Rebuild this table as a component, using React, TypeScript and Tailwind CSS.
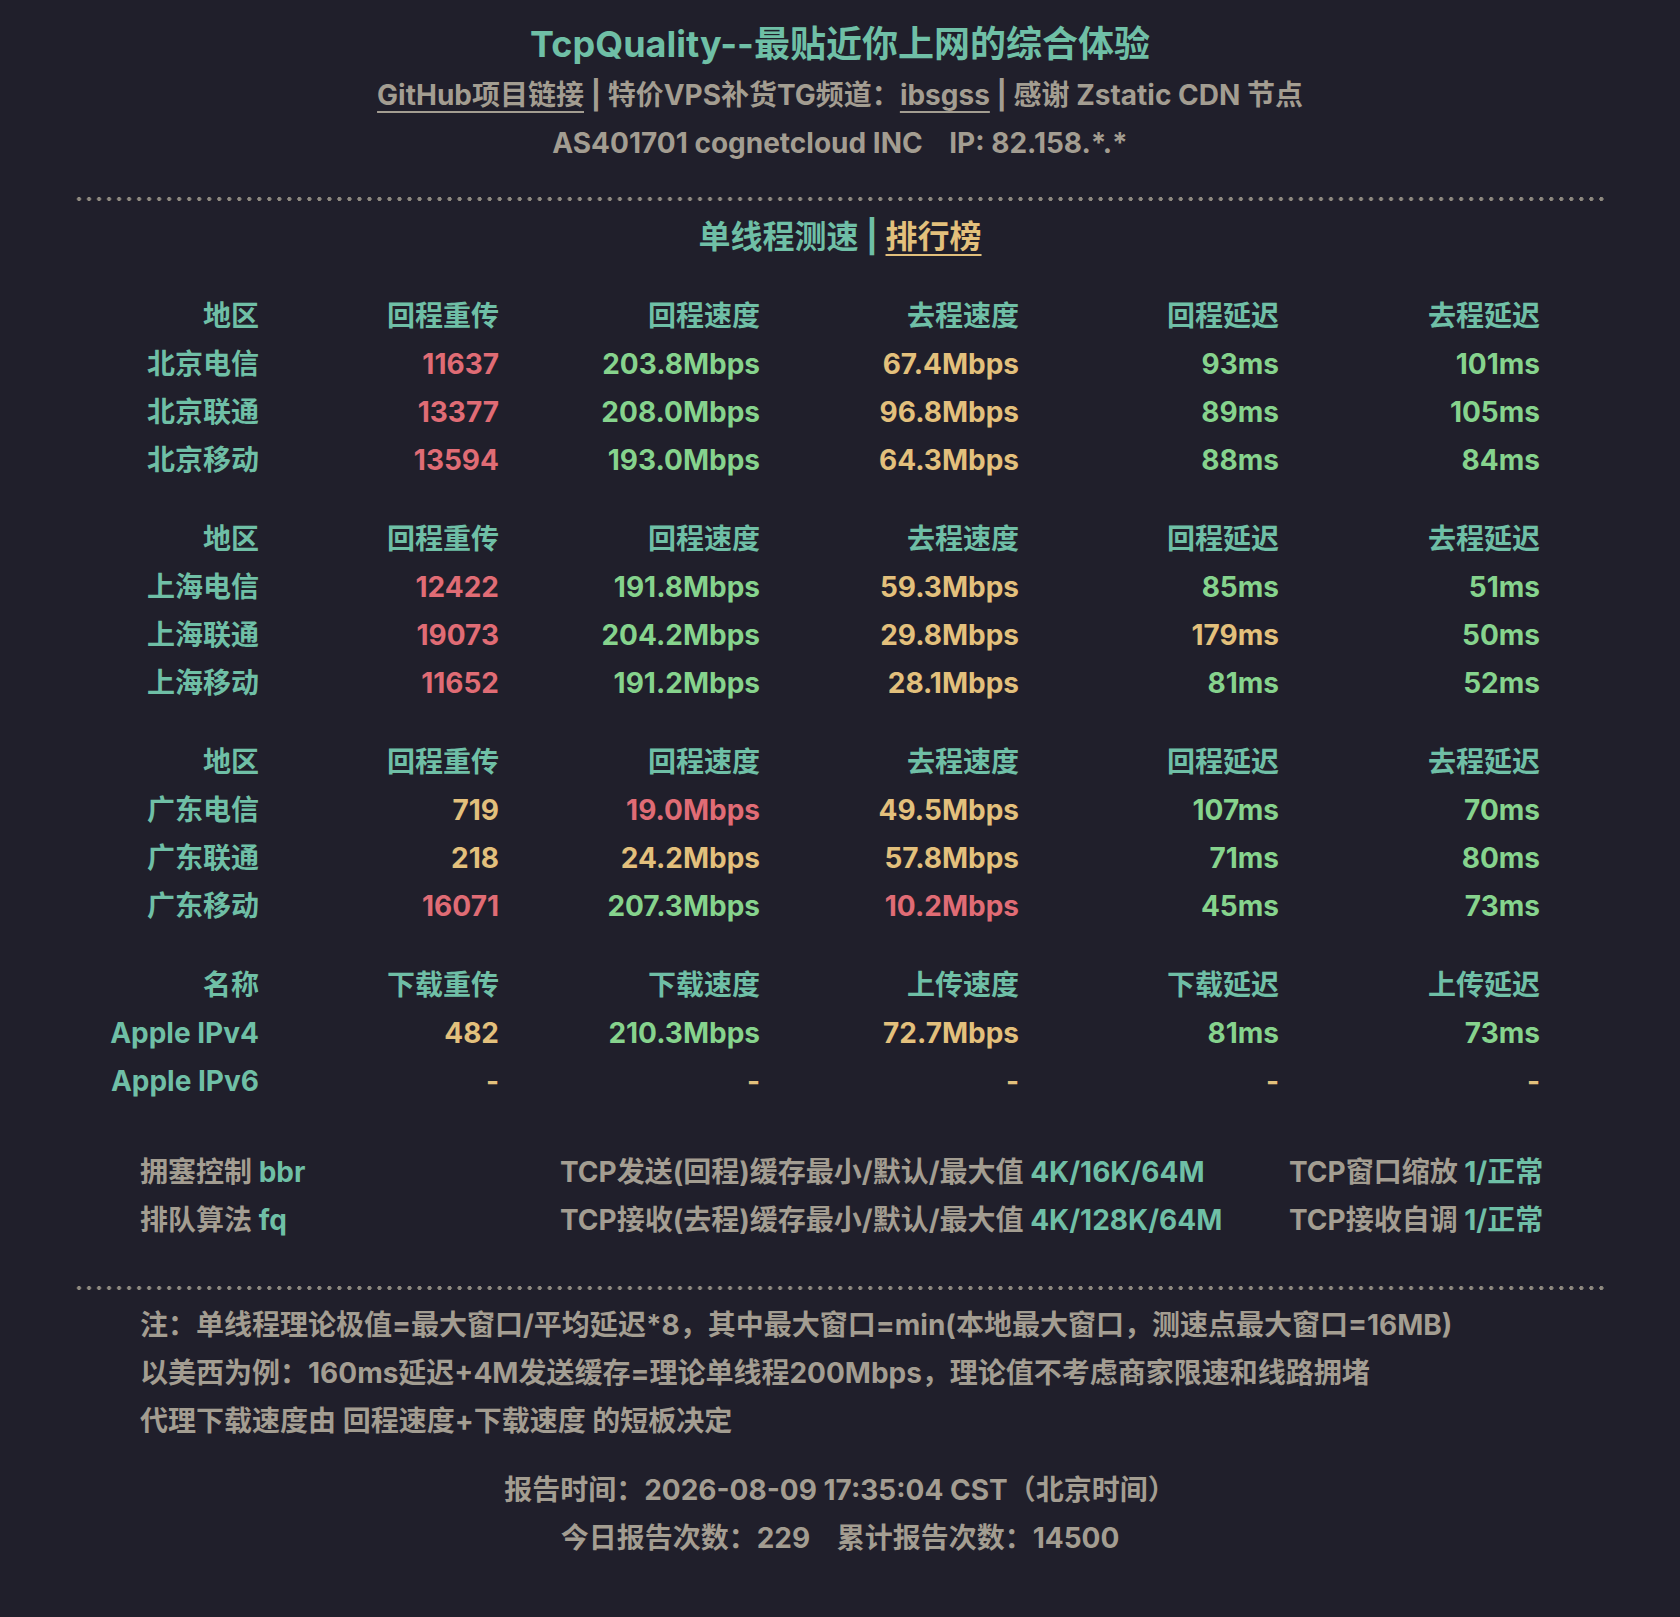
import React from 'react';

type Cell = { text: string; tone: 'red' | 'green' | 'yellow' };

interface Group {
  head: string[];
  rows: { name: string; cells: Cell[] }[];
}

const R = (text: string): Cell => ({ text, tone: 'red' });
const G = (text: string): Cell => ({ text, tone: 'green' });
const Y = (text: string): Cell => ({ text, tone: 'yellow' });

const lineHead = ['地区', '回程重传', '回程速度', '去程速度', '回程延迟', '去程延迟'];

const groups: Group[] = [
  {
    head: lineHead,
    rows: [
      { name: '北京电信', cells: [R('11637'), G('203.8Mbps'), Y('67.4Mbps'), G('93ms'), G('101ms')] },
      { name: '北京联通', cells: [R('13377'), G('208.0Mbps'), Y('96.8Mbps'), G('89ms'), G('105ms')] },
      { name: '北京移动', cells: [R('13594'), G('193.0Mbps'), Y('64.3Mbps'), G('88ms'), G('84ms')] },
    ],
  },
  {
    head: lineHead,
    rows: [
      { name: '上海电信', cells: [R('12422'), G('191.8Mbps'), Y('59.3Mbps'), G('85ms'), G('51ms')] },
      { name: '上海联通', cells: [R('19073'), G('204.2Mbps'), Y('29.8Mbps'), Y('179ms'), G('50ms')] },
      { name: '上海移动', cells: [R('11652'), G('191.2Mbps'), Y('28.1Mbps'), G('81ms'), G('52ms')] },
    ],
  },
  {
    head: lineHead,
    rows: [
      { name: '广东电信', cells: [Y('719'), R('19.0Mbps'), Y('49.5Mbps'), G('107ms'), G('70ms')] },
      { name: '广东联通', cells: [Y('218'), Y('24.2Mbps'), Y('57.8Mbps'), G('71ms'), G('80ms')] },
      { name: '广东移动', cells: [R('16071'), G('207.3Mbps'), R('10.2Mbps'), G('45ms'), G('73ms')] },
    ],
  },
  {
    head: ['名称', '下载重传', '下载速度', '上传速度', '下载延迟', '上传延迟'],
    rows: [
      { name: 'Apple IPv4', cells: [Y('482'), G('210.3Mbps'), Y('72.7Mbps'), G('81ms'), G('73ms')] },
      { name: 'Apple IPv6', cells: [Y('-'), Y('-'), Y('-'), Y('-'), Y('-')] },
    ],
  },
];

const toneClass = {
  red: 'text-[#e06c75]',
  green: 'text-[#86d38d]',
  yellow: 'text-[#e3c07c]',
};

function Dots() {
  return (
    <div className="ml-[74px] mr-[72px] h-[4px] bg-[radial-gradient(circle,#8f8a80_1.8px,transparent_2.2px)] bg-[length:10.02px_4px]" />
  );
}

function ResultGroup({ group }: { group: Group }) {
  return (
    <div className="grid grid-cols-[259px_240px_261px_259px_260px_261px] text-right">
      {group.head.map((h) => (
        <div key={h} className="h-[48px] leading-[48px] text-[#6fbfa6]">
          {h}
        </div>
      ))}
      {group.rows.map((row) => (
        <React.Fragment key={row.name}>
          <div className="h-[48px] leading-[48px] text-[#6fbfa6]">{row.name}</div>
          {row.cells.map((c, i) => (
            <div key={i} className={`h-[48px] leading-[48px] ${toneClass[c.tone]}`}>
              {c.text}
            </div>
          ))}
        </React.Fragment>
      ))}
    </div>
  );
}

export default function App() {
  return (
    <div
      className="w-[1680px] min-h-[1617px] bg-[#201f2b] text-[28px] font-bold text-[#a39d91]"
      style={{ fontFamily: 'Inter, "Noto Sans CJK SC", sans-serif' }}
    >
      {/* 标题 */}
      <div className="pt-[20px] text-center">
        <h1 className="h-[48px] leading-[48px] text-[36px] text-[#6fbfa6]">TcpQuality--最贴近你上网的综合体验</h1>
        <p className="mt-[3px] h-[48px] leading-[48px]">
          <span className="underline underline-offset-[6px] decoration-2">GitHub项目链接</span> | 特价VPS补货TG频道：
          <span className="underline underline-offset-[6px] decoration-2">ibsgss</span> | 感谢 Zstatic CDN 节点
        </p>
        <p className="h-[48px] leading-[48px] whitespace-pre">AS401701 cognetcloud INC    IP: 82.158.*.*</p>
      </div>

      <div className="mt-[30px]">
        <Dots />
      </div>

      <div className="mt-[12px] h-[48px] leading-[48px] text-center text-[32px] text-[#6fbfa6]">
        单线程测速 | <span className="text-[#e3c07c] underline underline-offset-[6px] decoration-2">排行榜</span>
      </div>

      {/* 测速结果 */}
      <div className="mt-[31px] flex flex-col gap-[31px]">
        {groups.map((g, i) => (
          <ResultGroup key={i} group={g} />
        ))}
      </div>

      {/* TCP 参数 */}
      <div className="mt-[43px] grid grid-cols-[420px_729px_1fr] pl-[140px]">
        <div className="h-[48px] leading-[48px]">
          拥塞控制 <span className="text-[#6fbfa6]">bbr</span>
        </div>
        <div className="h-[48px] leading-[48px]">
          TCP发送(回程)缓存最小/默认/最大值 <span className="text-[#6fbfa6]">4K/16K/64M</span>
        </div>
        <div className="h-[48px] leading-[48px]">
          TCP窗口缩放 <span className="text-[#6fbfa6]">1/正常</span>
        </div>
        <div className="h-[48px] leading-[48px]">
          排队算法 <span className="text-[#6fbfa6]">fq</span>
        </div>
        <div className="h-[48px] leading-[48px]">
          TCP接收(去程)缓存最小/默认/最大值 <span className="text-[#6fbfa6]">4K/128K/64M</span>
        </div>
        <div className="h-[48px] leading-[48px]">
          TCP接收自调 <span className="text-[#6fbfa6]">1/正常</span>
        </div>
      </div>

      <div className="mt-[42px]">
        <Dots />
      </div>

      {/* 说明 */}
      <div className="mt-[11px] pl-[140px]">
        <p className="h-[48px] leading-[48px]">
          注：单线程理论极值=最大窗口/平均延迟*8，其中最大窗口=min(本地最大窗口，测速点最大窗口=16MB)
        </p>
        <p className="h-[48px] leading-[48px]">
          以美西为例：160ms延迟+4M发送缓存=理论单线程200Mbps，理论值不考虑商家限速和线路拥堵
        </p>
        <p className="h-[48px] leading-[48px]">代理下载速度由 回程速度+下载速度 的短板决定</p>
      </div>

      <div className="mt-[21px] text-center">
        <p className="h-[48px] leading-[48px]">报告时间：2026-08-09 17:35:04 CST（北京时间）</p>
        <p className="h-[48px] leading-[48px] whitespace-pre">今日报告次数：229    累计报告次数：14500</p>
      </div>
    </div>
  );
}
